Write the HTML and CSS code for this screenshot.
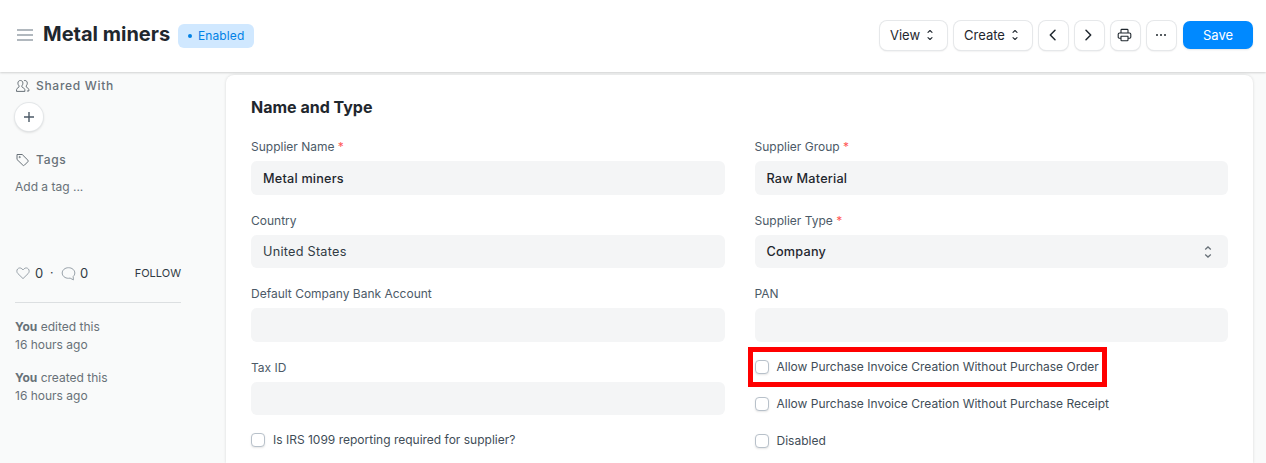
FILE: index.html
```html
<!DOCTYPE html>
<html lang="en">
<head>
<meta charset="utf-8">
<title>Metal miners</title>
<link rel="stylesheet" href="styles.css">
</head>
<body>
<header class="page-head">
  <svg class="menu-icon" width="16" height="12" viewBox="0 0 16 12"><path d="M0 1h16M0 6h16M0 11h16"/></svg>
  <h1 class="page-title">Metal miners</h1>
  <span class="status"><i class="status-dot"></i>Enabled</span>
  <div class="actions">
    <button class="btn btn-view">View<svg class="icon" width="8" height="12" viewBox="0 0 8 12"><path d="M2 3.400 4 1.500l2 1.900M2 8.600 4 10.500l2-1.900"/></svg></button>
    <button class="btn btn-create">Create<svg class="icon" width="8" height="12" viewBox="0 0 8 12"><path d="M2 3.400 4 1.500l2 1.900M2 8.600 4 10.500l2-1.900"/></svg></button>
    <button class="btn btn-icon" aria-label="Previous"><svg class="icon arrow" width="16" height="16" viewBox="0 0 16 16"><path d="M10 3.300 5.300 8l4.700 4.700"/></svg></button>
    <button class="btn btn-icon" aria-label="Next"><svg class="icon arrow" width="16" height="16" viewBox="0 0 16 16"><path d="M5 3.300 9.700 8 5 12.700"/></svg></button>
    <button class="btn btn-icon" aria-label="Print"><svg class="icon" width="16" height="16" viewBox="0 0 16 16"><path d="M4 6V3.200c0-.5.300-.8.800-.8h5.400c.5 0 .8.300.8.800V6M4 11.200H2.300c-.7 0-1.100-.4-1.100-1.100V7.300C1.200 6.500 1.700 6 2.500 6h10c.8 0 1.300.5 1.300 1.300v2.800c0 .7-.4 1.100-1.100 1.100H11M4 9.200h7v3.700c0 .5-.3.800-.8.800H4.800c-.5 0-.8-.3-.8-.8z"/></svg></button>
    <button class="btn btn-icon" aria-label="More"><svg class="dots" width="12" height="4" viewBox="0 0 12 4"><circle cx="2" cy="2" r="1"/><circle cx="6" cy="2" r="1"/><circle cx="10" cy="2" r="1"/></svg></button>
    <button class="btn btn-save">Save</button>
  </div>
</header>
<div class="page-body">
  <aside class="sidebar">
    <div class="side-label"><svg class="side-icon" width="15" height="14" viewBox="0 0 15 14"><path d="M5.400 1.500c1.600 0 2.500 1.100 2.500 2.700 0 1.200-.5 2-1 2.600v1.100c0 .8 2.700.9 2.900 2.600l.1 1.900H1.500l.1-1.900C1.800 8.800 4 8.700 4 7.900V6.800c-.6-.6-1.100-1.400-1.100-2.600 0-1.600.9-2.700 2.500-2.700zM8.900 1.700c.3-.1.600-.2.900-.2 1.600 0 2.500 1.100 2.500 2.700 0 1.200-.5 2-1 2.600v1.100c0 .8 2.300.9 2.500 2.600l.1 1.500h-2"/></svg>Shared With</div>
    <button class="add" aria-label="Add"><svg width="10" height="10" viewBox="0 0 10 10"><path d="M5 0v10M0 5h10"/></svg></button>
    <div class="side-label"><svg class="side-icon" width="15" height="14" viewBox="0 0 15 14"><path d="M2 1.500h5.200l5.700 5.700c.5.500.5 1 0 1.500l-3.500 3.500c-.5.500-1 .5-1.500 0L2 6.500z"/><circle cx="4.700" cy="4.100" r=".6"/></svg>Tags</div>
    <div class="add-tag">Add a tag ...</div>
    <div class="reactions">
      <svg class="react-icon" width="15" height="14" viewBox="0 0 15 14"><path d="M8 12.600 2.900 7.600C1.600 6.300 1.500 4.300 2.600 3c1.200-1.400 3.100-1.400 4.300-.2L8 3.900l1.100-1.100c1.200-1.200 3.100-1.200 4.300.2 1.100 1.300 1 3.300-.3 4.600z"/></svg>
      <span class="count">0</span><span class="sep">·</span>
      <svg class="react-icon" width="15" height="15" viewBox="0 0 15 15"><path d="M7.500 1.700c3.500 0 6.300 2.300 6.300 5.300 0 1.400-.6 2.600-1.600 3.500l.2 3.400-3.300-1.800c-.5.100-1 .2-1.600.2-3.500 0-6.300-2.300-6.300-5.300s2.800-5.300 6.300-5.300z"/></svg>
      <span class="count second">0</span>
      <span class="follow">FOLLOW</span>
    </div>
    <div class="history"><b>You</b> edited this<br>16 hours ago</div>
    <div class="history"><b>You</b> created this<br>16 hours ago</div>
  </aside>
  <main class="card">
    <h2 class="section-title">Name and Type</h2>
    <div class="columns">
      <div class="column">
        <div class="field"><label class="label">Supplier Name <em>*</em></label><div class="input required">Metal miners</div></div>
        <div class="field"><label class="label">Country</label><div class="input">United States</div></div>
        <div class="field"><label class="label">Default Company Bank Account</label><div class="input"></div></div>
        <div class="field"><label class="label">Tax ID</label><div class="input"></div></div>
        <label class="check"><i class="box"></i>Is IRS 1099 reporting required for supplier?</label>
      </div>
      <div class="column">
        <div class="field"><label class="label">Supplier Group <em>*</em></label><div class="input required">Raw Material</div></div>
        <div class="field"><label class="label">Supplier Type <em>*</em></label><div class="input required">Company<svg class="select-icon" width="8" height="14" viewBox="0 0 8 14"><path d="M1.200 4.400 4 1.900l2.800 2.500M1.200 9.600 4 12.100l2.800-2.500"/></svg></div></div>
        <div class="field"><label class="label">PAN</label><div class="input"></div></div>
        <label class="check highlighted"><i class="box"></i>Allow Purchase Invoice Creation Without Purchase Order</label>
        <label class="check receipt"><i class="box"></i>Allow Purchase Invoice Creation Without Purchase Receipt</label>
        <label class="check"><i class="box"></i>Disabled</label>
      </div>
    </div>
  </main>
</div>
</body>
</html>
```
FILE: styles.css
```css
* { box-sizing: border-box; }
body {
  margin: 0;
  height: 463px;
  overflow: hidden;
  background: #f9fafa;
  color: #1f272e;
  font: 12px/18px Inter, "Liberation Sans", sans-serif;
}
svg { display: block; flex: none; fill: none; }
button { font: inherit; letter-spacing: inherit; color: inherit; padding: 0; }
.page-head {
  position: relative;
  display: flex;
  align-items: center;
  height: 72px;
  padding: 0 13px 2px 17px;
  background: #fff;
  box-shadow: 0 1px 2px rgba(0, 0, 0, .16);
}
.menu-icon { stroke: #98a1a9; stroke-width: 1.6; }
.page-title {
  width: 127px;
  margin: 0 8px 3px 10px;
  font-size: 20px;
  line-height: 30px;
  font-weight: 700;
  white-space: nowrap;
}
.status {
  display: flex;
  align-items: center;
  width: 76px;
  height: 24px;
  margin-top: 2px;
  padding-left: 10px;
  border-radius: 6px;
  background: #d0e8ff;
  color: #0081e6;
  letter-spacing: .1px;
}
.status-dot { width: 4px; height: 4px; margin-right: 6px; border-radius: 50%; background: #0081e6; }
.actions { display: flex; align-items: center; gap: 7px; margin-left: auto; }
.btn {
  display: flex;
  align-items: center;
  justify-content: center;
  height: 29px;
  padding-bottom: 1px;
  border: 0;
  border-radius: 7px;
  background: #fff;
  box-shadow: 0 0 0 1px #e6e8ea, 0 1px 2px rgba(0, 0, 0, .16);
  font-size: 13px;
}
.btn-view { width: 67px; gap: 6px; padding-right: 3px; }
.btn-create { width: 78px; gap: 6px; padding-right: 3px; }
.btn-icon { width: 29px; padding: 0 1px 0 0; }
.btn-save { width: 70px; height: 28px; background: #0089ff; color: #fff; box-shadow: 0 1px 2px rgba(0, 0, 0, .1); }
.icon { stroke: #1f272e; stroke-width: 1.1; stroke-linecap: round; stroke-linejoin: round; }
.arrow { stroke-width: 1.5; }
.dots { fill: #1f272e; }
.page-body { display: flex; height: 391px; padding: 3px 13px 0 15px; }
.sidebar { width: 166px; margin-right: 45px; padding-top: 1px; color: #687178; }
.side-label { display: flex; align-items: center; gap: 6px; height: 20px; font-weight: 500; letter-spacing: .7px; }
.side-icon { stroke: #687178; stroke-width: 1; stroke-linejoin: round; }
.add {
  display: flex;
  align-items: center;
  justify-content: center;
  width: 28px;
  height: 28px;
  margin: 7px 0 19px;
  border: 0;
  border-radius: 50%;
  background: #fff;
  box-shadow: 0 0 0 1px #e4e7e9, 0 1px 3px rgba(0, 0, 0, .2);
}
.add svg { stroke: #4c5a67; stroke-width: 1.4; }
.add-tag { margin-top: 8px; }
.reactions {
  display: flex;
  align-items: center;
  height: 60px;
  margin-top: 47px;
  border-bottom: 1px solid #dcdfe1;
  color: #313b44;
}
.react-icon { stroke: #98a1a9; stroke-width: 1; margin-top: 1px; }
.count { width: 8px; margin-left: 5px; font-size: 13px; }
.second { margin-left: 4px; }
.sep { width: 4px; margin: 0 7px; }
.follow { margin-left: auto; font-size: 11px; }
.history { margin-top: 15px; }
.history b { font-weight: 700; }
.card {
  flex: 1;
  height: 388px;
  padding: 20px 25px 0;
  border-radius: 8px 8px 0 0;
  background: #fff;
  box-shadow: 0 0 3px rgba(0, 0, 0, .14);
}
.section-title { margin: 0; font-size: 16px; line-height: 24px; font-weight: 700; }
.columns { display: grid; grid-template-columns: 1fr 1fr; gap: 30px; margin-top: 17px; }
.field { height: 73.6px; }
.label { display: block; height: 25px; padding-top: 2px; color: #4c5a67; }
.label em { color: #ff5858; font-style: normal; }
.input {
  display: flex;
  align-items: center;
  height: 33.6px;
  padding: 1px 16px 0 12px;
  border-radius: 6px;
  background: #f4f5f6;
  font-size: 12.7px;
  letter-spacing: .25px;
  color: #313b44;
}
.required { padding-top: 2px; color: #1f272e; font-weight: 500; letter-spacing: .2px; }
.select-icon { margin-left: auto; stroke: #687178; stroke-width: 1.3; }
.check { display: flex; align-items: center; width: max-content; height: 37px; color: #414d57; }
.column:first-child .check { margin-top: -9px; }
.box {
  width: 14px;
  height: 14px;
  margin-right: 8px;
  border: 1px solid #b8c1ca;
  border-radius: 4px;
  background: #fff;
  box-shadow: 0 1px 2px rgba(0, 0, 0, .1);
}
.highlighted { width: 359px; height: 40px; margin: -10px 0 0 -7px; padding-left: 2px; border: 5px solid #f00; white-space: nowrap; }
.receipt { margin-top: -1px; }
```
